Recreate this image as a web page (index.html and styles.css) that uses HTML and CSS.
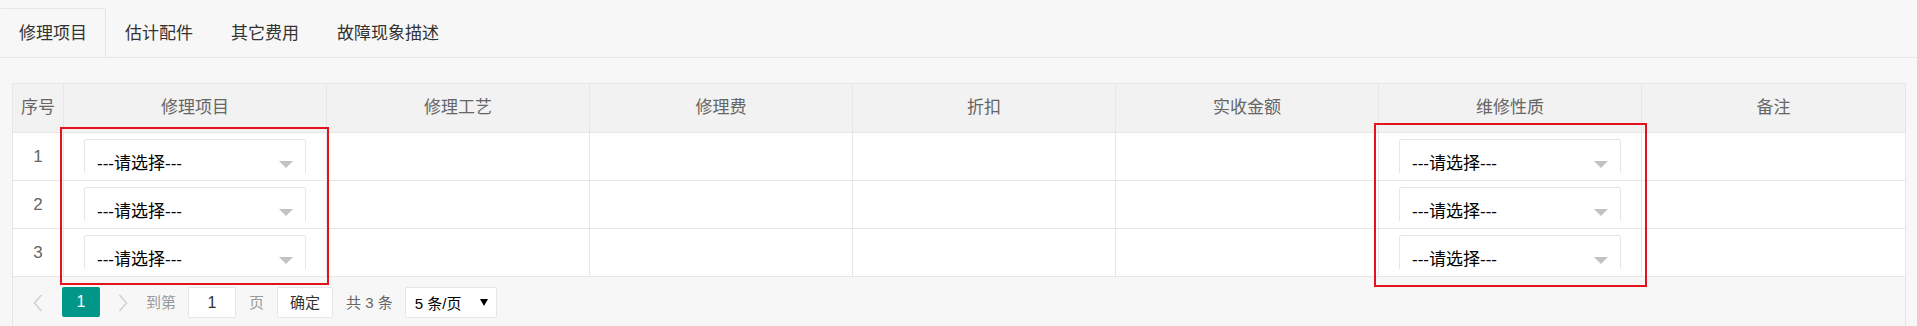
FILE: index.html
```html
<!DOCTYPE html>
<html lang="zh-CN">
<head>
<meta charset="utf-8">
<title>修理项目</title>
<link rel="stylesheet" href="styles.css">
</head>
<body>
<div class="tabs">
  <div class="tab tab-active">修理项目</div>
  <div class="tab">估计配件</div>
  <div class="tab">其它费用</div>
  <div class="tab">故障现象描述</div>
</div>

<div class="table-wrap">
  <table class="grid">
    <colgroup>
      <col class="col-no">
      <col><col><col><col><col><col><col>
    </colgroup>
    <thead>
      <tr>
        <th>序号</th><th>修理项目</th><th>修理工艺</th><th>修理费</th><th>折扣</th><th>实收金额</th><th>维修性质</th><th class="last">备注</th>
      </tr>
    </thead>
    <tbody>
      <tr>
        <td class="no">1</td>
        <td class="sel-cell"><div class="clip"><div class="select"><span>---请选择---</span><i class="tri"></i></div></div></td>
        <td></td><td></td><td></td><td></td>
        <td class="sel-cell"><div class="clip"><div class="select"><span>---请选择---</span><i class="tri"></i></div></div></td>
        <td class="last"></td>
      </tr>
      <tr>
        <td class="no">2</td>
        <td class="sel-cell"><div class="clip"><div class="select"><span>---请选择---</span><i class="tri"></i></div></div></td>
        <td></td><td></td><td></td><td></td>
        <td class="sel-cell"><div class="clip"><div class="select"><span>---请选择---</span><i class="tri"></i></div></div></td>
        <td class="last"></td>
      </tr>
      <tr>
        <td class="no">3</td>
        <td class="sel-cell"><div class="clip"><div class="select"><span>---请选择---</span><i class="tri"></i></div></div></td>
        <td></td><td></td><td></td><td></td>
        <td class="sel-cell"><div class="clip"><div class="select"><span>---请选择---</span><i class="tri"></i></div></div></td>
        <td class="last"></td>
      </tr>
    </tbody>
  </table>
  <div class="pager">
    <span class="arrow"><svg width="10" height="18" viewBox="0 0 10 18"><path d="M8.5 1 L1.5 9 L8.5 17" fill="none" stroke="#d2d2d2" stroke-width="1.6"/></svg></span>
    <span class="page-cur">1</span>
    <span class="arrow arrow-next"><svg width="10" height="18" viewBox="0 0 10 18"><path d="M1.5 1 L8.5 9 L1.5 17" fill="none" stroke="#d2d2d2" stroke-width="1.6"/></svg></span>
    <span class="pg-label">到第</span>
    <span class="pg-input">1</span>
    <span class="pg-label">页</span>
    <span class="pg-btn">确定</span>
    <span class="pg-count">共 3 条</span>
    <span class="pg-select"><span>5 条/页</span><i class="pg-tri"></i></span>
  </div>
</div>

<div class="mark mark-a"></div>
<div class="mark mark-b"></div>
</body>
</html>
```

FILE: styles.css
```css
html, body {
  margin: 0;
  padding: 0;
}
body {
  background: #f7f7f7;
  font-family: "Liberation Sans", "Noto Sans CJK SC", sans-serif;
  font-size: 17px;
  color: #333;
  width: 1917px;
  height: 326px;
  overflow: hidden;
  position: relative;
}

/* tabs */
.tabs {
  margin-top: 8px;
  height: 49px;
  border-bottom: 1px solid #e6e6e6;
  display: flex;
}
.tab {
  padding: 0 18px;
  height: 49px;
  line-height: 49px;
  color: #333;
  box-sizing: border-box;
  border: 1px solid transparent;
  border-bottom: none;
}
.tab-active {
  border-color: #e6e6e6;
  border-left-color: transparent;
  width: 106px;
}

/* table */
.table-wrap {
  margin: 25px 11px 0 12px;
  border: 1px solid #e6e6e6;
  background: #f7f7f7;
}
.grid {
  width: 100%;
  table-layout: fixed;
  border-collapse: separate;
  border-spacing: 0;
}
.col-no { width: 51px; }
.grid th, .grid td {
  padding: 0;
  border-right: 1px solid #e6e6e6;
  border-bottom: 1px solid #e6e6e6;
  text-align: center;
  vertical-align: middle;
}
.grid th.last, .grid td.last { border-right: none; }
.grid th {
  background: #f2f2f2;
  height: 48px;
  font-weight: normal;
  color: #666;
  line-height: 20px;
}
.grid td {
  background: #fff;
  height: 47px;
  color: #666;
}
.grid td.no { line-height: 20px; }
.grid td.sel-cell {
  padding: 6px 20px 7px 20px;
  vertical-align: top;
  height: 34px;
}
.clip {
  height: 34px;
  overflow: hidden;
}
.select {
  box-sizing: border-box;
  height: 46px;
  border: 1px solid #e6e6e6;
  border-radius: 2px;
  background: #fff;
  display: flex;
  align-items: center;
  justify-content: space-between;
  padding: 3px 12px 0 12px;
  color: #000;
  text-align: left;
}
.select span { line-height: 20px; }
.tri {
  width: 0;
  height: 0;
  border-left: 7px solid transparent;
  border-right: 7px solid transparent;
  border-top: 7px solid #c2c2c2;
  margin-top: 1px;
}

/* pager */
.pager {
  height: 50px;
  box-sizing: border-box;
  padding: 10px 0 0 20px;
  display: flex;
  align-items: flex-start;
  font-size: 15px;
}
.arrow {
  height: 31px;
  display: flex;
  align-items: center;
}
.page-cur {
  margin-left: 19px;
  width: 38px;
  height: 30px;
  line-height: 30px;
  border-radius: 2px;
  background: #009688;
  color: #fff;
  text-align: center;
  font-size: 16px;
}
.arrow-next { margin-left: 18px; }
.pg-label {
  margin-left: 18px;
  line-height: 31px;
  color: #999;
}
.pg-input {
  margin-left: 12px;
  width: 48px;
  height: 31px;
  box-sizing: border-box;
  border: 1px solid #e6e6e6;
  border-radius: 2px;
  background: #fff;
  text-align: center;
  line-height: 29px;
  color: #333;
  font-size: 16px;
}
.pg-input + .pg-label { margin-left: 13px; }
.pg-btn {
  margin-left: 13px;
  width: 56px;
  height: 31px;
  box-sizing: border-box;
  border: 1px solid #e6e6e6;
  border-radius: 2px;
  background: #fff;
  text-align: center;
  line-height: 29px;
  color: #333;
}
.pg-count {
  margin-left: 13px;
  line-height: 31px;
  color: #666;
}
.pg-select {
  margin-left: 12px;
  width: 92px;
  height: 31px;
  box-sizing: border-box;
  border: 1px solid #e6e6e6;
  border-radius: 2px;
  background: #fff;
  display: flex;
  align-items: center;
  justify-content: space-between;
  padding: 0 8px 0 9px;
  color: #000;
}
.pg-tri {
  width: 0;
  height: 0;
  border-left: 4px solid transparent;
  border-right: 4px solid transparent;
  border-top: 7px solid #000;
}

/* red annotation boxes */
.mark {
  position: absolute;
  border: 2px solid #e3121c;
  box-sizing: border-box;
}
.mark-a { left: 60px; top: 127px; width: 269px; height: 158px; }
.mark-b { left: 1374px; top: 123px; width: 273px; height: 164px; }
```
